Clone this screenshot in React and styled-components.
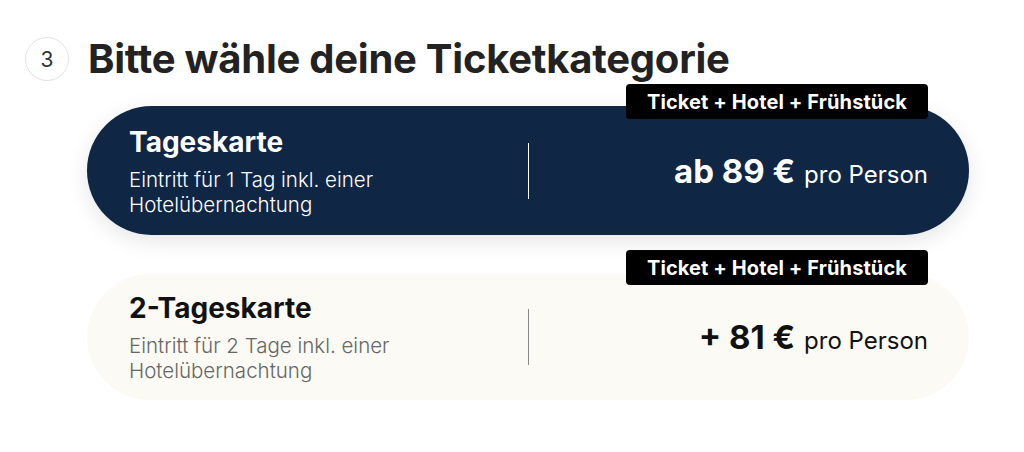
import React from 'react';
import styled, {createGlobalStyle} from 'styled-components';

const GlobalStyle = createGlobalStyle`
  body {
    margin: 0;
    background: #ffffff;
    font-family: Inter, "Noto Sans", sans-serif;
  }
`;

const Page = styled.div`
  padding: 36px 0 0 25px;
  width: 1024px;
  height: 452px;
  box-sizing: border-box;
`;

const Header = styled.div`
  display: flex;
  align-items: center;
  gap: 19px;
`;

const Step = styled.div`
  width: 42px;
  height: 42px;
  border: 1px solid #e2e2e2;
  border-radius: 50%;
  display: flex;
  align-items: center;
  justify-content: center;
  font-size: 21px;
  color: #333;
`;

const Heading = styled.h1`
  margin: 0;
  font-size: 40px;
  line-height: 46px;
  font-weight: 700;
  color: #222;
  letter-spacing: -0.25px;
`;

const List = styled.div`
  display: flex;
  flex-direction: column;
  gap: 39px;
  margin: 24px 0 0 62px;
  width: 882px;
`;

const Card = styled.div`
  position: relative;
  height: ${(props) => props.h}px;
  border-radius: 66px;
  background: ${(props) => props.selected ? '#0f2645' : '#fbfaf5'};
  color: ${(props) => props.selected ? '#ffffff' : '#111'};
  box-shadow: ${(props) => props.selected ? '0 6px 22px rgba(0,0,0,0.10)' : 'none'};
  display: grid;
  grid-template-columns: 1fr 1px 1fr;
  align-items: center;
  padding: 0 41px 0 42px;
`;

const Badge = styled.div`
  position: absolute;
  top: ${(props) => props.top}px;
  right: 41px;
  height: 35px;
  padding: 0 21px;
  display: flex;
  align-items: center;
  background: #000;
  color: #fff;
  border-radius: 4px;
  font-size: 20px;
  font-weight: 700;
  letter-spacing: 0.1px;
`;

const Info = styled.div`
  display: flex;
  flex-direction: column;
`;

const Title = styled.div`
  font-size: 28px;
  line-height: 34px;
  font-weight: 700;
  margin-bottom: 8px;
`;

const Desc = styled.div`
  font-size: 20.5px;
  line-height: 25px;
  font-weight: 300;
  color: ${(props) => props.selected ? '#ffffff' : '#666'};
  max-width: 320px;
`;

const Divider = styled.div`
  width: 1px;
  height: 56px;
  background: ${(props) => props.selected ? '#ffffff' : '#888'};
`;

const Price = styled.div`
  justify-self: end;
  display: flex;
  align-items: baseline;
  gap: 9px;
`;

const Amount = styled.span`
  font-size: 33px;
  font-weight: 700;
`;

const Per = styled.span`
  font-size: 24px;
  font-weight: 400;
`;

const tickets = [
  {title: 'Tageskarte', desc: 'Eintritt für 1 Tag inkl. einer Hotelübernachtung', price: 'ab 89 €', selected: true, h: 129, top: -22},
  {title: '2-Tageskarte', desc: 'Eintritt für 2 Tage inkl. einer Hotelübernachtung', price: '+ 81 €', selected: false, h: 126, top: -24},
];

export default function App() {
  return (
    <Page>
      <GlobalStyle />
      <Header>
        <Step>3</Step>
        <Heading>Bitte wähle deine Ticketkategorie</Heading>
      </Header>
      <List>
        {tickets.map((t) => (
          <Card key={t.title} selected={t.selected} h={t.h}>
            <Badge top={t.top}>Ticket + Hotel + Frühstück</Badge>
            <Info>
              <Title>{t.title}</Title>
              <Desc selected={t.selected}>{t.desc}</Desc>
            </Info>
            <Divider selected={t.selected} />
            <Price>
              <Amount>{t.price}</Amount>
              <Per>pro Person</Per>
            </Price>
          </Card>
        ))}
      </List>
    </Page>
  );
}
